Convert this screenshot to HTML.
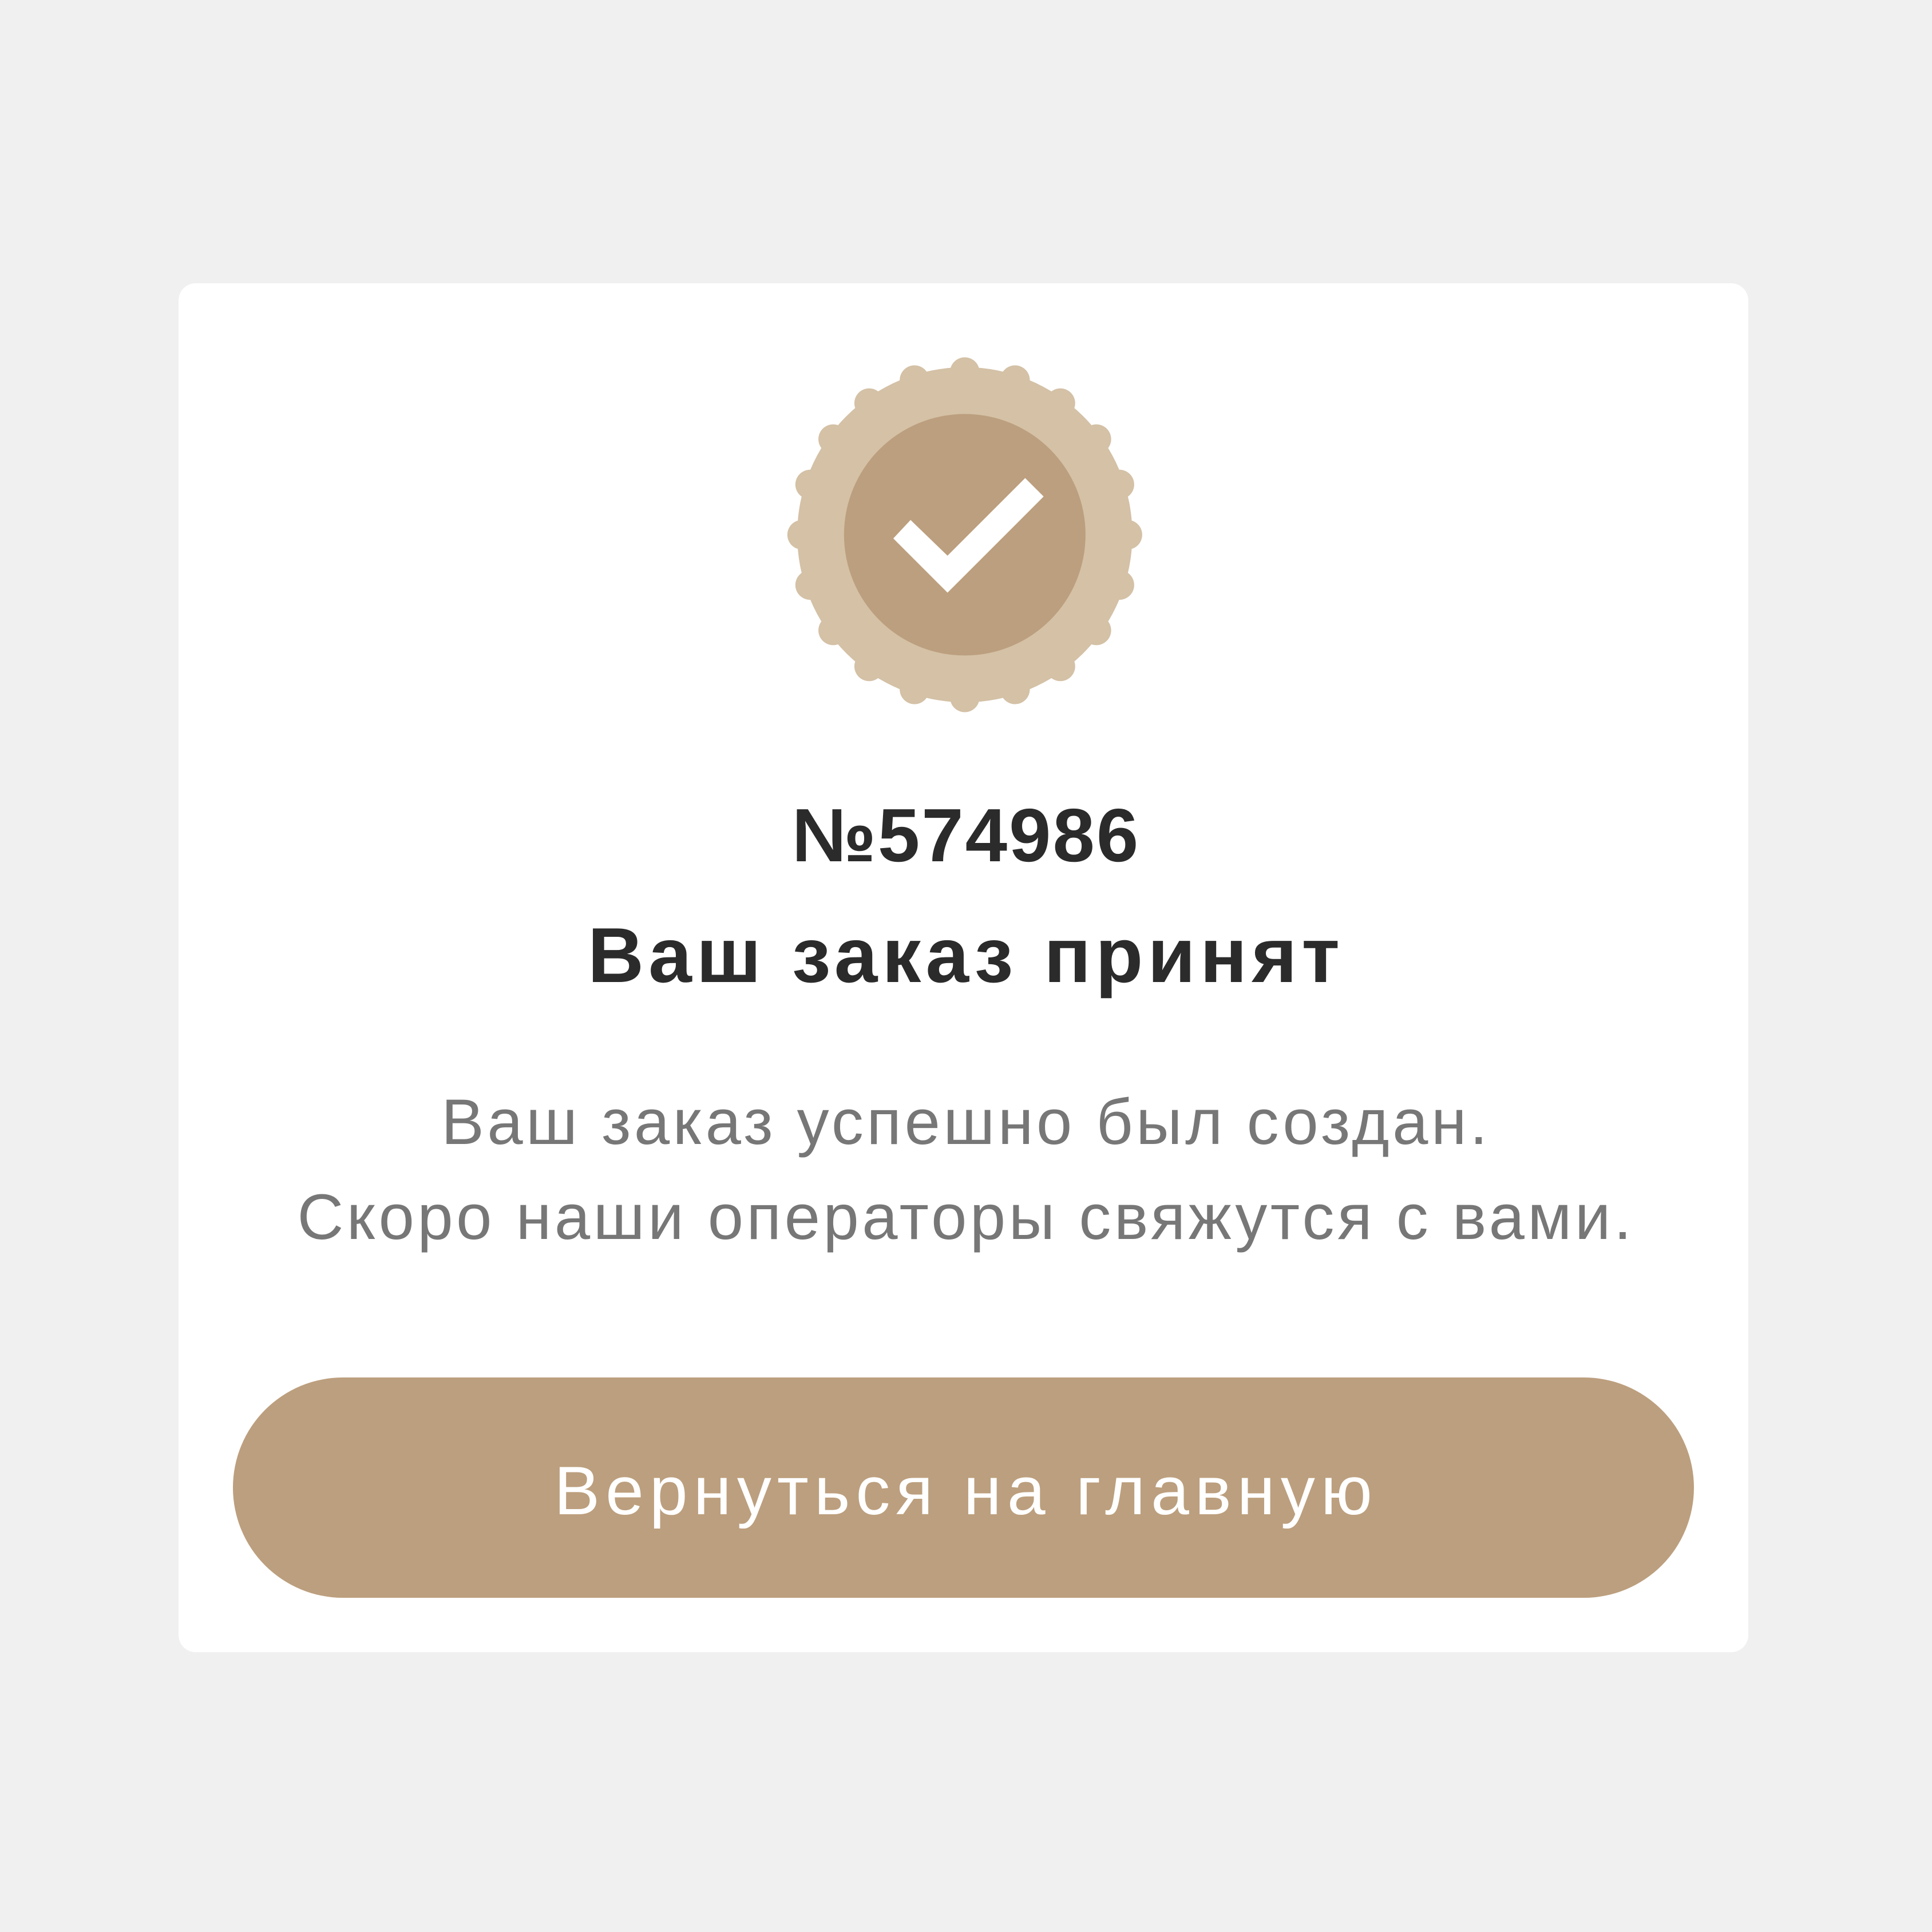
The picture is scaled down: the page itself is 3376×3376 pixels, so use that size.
<!DOCTYPE html>
<html><head><meta charset="utf-8"><style>
html,body{margin:0;padding:0;}
body{width:3376px;height:3376px;background:#f0f0f0;position:relative;overflow:hidden;font-family:"Liberation Sans",sans-serif;}
.card{position:absolute;left:312px;top:495px;width:2743px;height:2392px;background:#fff;border-radius:30px;}
.t{position:absolute;left:0;width:3376px;text-align:center;white-space:nowrap;}
.num{top:1385px;font-size:132px;font-weight:bold;color:#2b2b2b;line-height:150px;letter-spacing:3px;}
.title{top:1594px;font-size:136px;font-weight:bold;color:#2b2b2b;line-height:150px;letter-spacing:8px;}
.p{font-size:112px;color:#777;line-height:140px;letter-spacing:5.5px;}
.btn{position:absolute;left:407px;top:2407px;width:2553px;height:385px;border-radius:193px;background:#bc9f7e;}
.bt{top:2530px;font-size:120px;color:#fff;line-height:150px;letter-spacing:10px;}
svg{position:absolute;left:0;top:0;}
</style></head><body>
<div class="card"></div>
<svg width="3376" height="3376" viewBox="0 0 1568 1568">
<circle cx="783" cy="434" r="136" fill="#d4c1a6"/>
<g fill="#d4c1a6">
<circle cx="783.0" cy="302.0" r="12"/><circle cx="823.8" cy="308.5" r="12"/><circle cx="860.6" cy="327.2" r="12"/><circle cx="889.8" cy="356.4" r="12"/><circle cx="908.5" cy="393.2" r="12"/><circle cx="915.0" cy="434.0" r="12"/><circle cx="908.5" cy="474.8" r="12"/><circle cx="889.8" cy="511.6" r="12"/><circle cx="860.6" cy="540.8" r="12"/><circle cx="823.8" cy="559.5" r="12"/><circle cx="783.0" cy="566.0" r="12"/><circle cx="742.2" cy="559.5" r="12"/><circle cx="705.4" cy="540.8" r="12"/><circle cx="676.2" cy="511.6" r="12"/><circle cx="657.5" cy="474.8" r="12"/><circle cx="651.0" cy="434.0" r="12"/><circle cx="657.5" cy="393.2" r="12"/><circle cx="676.2" cy="356.4" r="12"/><circle cx="705.4" cy="327.2" r="12"/><circle cx="742.2" cy="308.5" r="12"/>
</g>
<circle cx="783" cy="434" r="98" fill="#bc9f7e"/>
<polygon points="725,437 739,422 769,451 832,388 847,403 769,481" fill="#fff"/>
</svg>
<div class="t num">№574986</div>
<div class="t title">Ваш заказ принят</div>
<div class="t p" style="top:1891px">Ваш заказ успешно был создан.</div>
<div class="t p" style="top:2057px">Скоро наши операторы свяжутся с вами.</div>
<div class="btn"></div>
<div class="t bt">Вернуться на главную</div>
</body></html>
